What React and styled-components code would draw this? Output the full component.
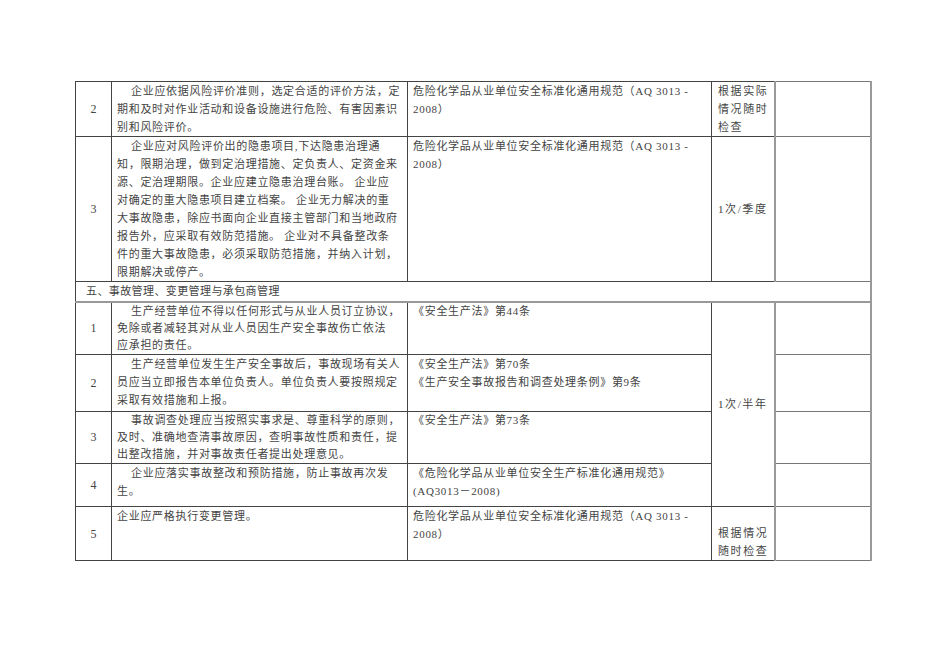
import React from 'react';
import styled, { createGlobalStyle } from 'styled-components';

const GlobalStyle = createGlobalStyle`
  html, body {
    margin: 0;
    padding: 0;
    background: #fff;
  }
  body {
    font-family: "Liberation Serif", "Noto Sans CJK SC", serif;
    color: #444;
  }
`;

const Page = styled.div`
  width: 950px;
  height: 672px;
  padding: 81px 0 0 75px;
  box-sizing: border-box;
  background: #fff;
`;

const Table = styled.table`
  width: 795px;
  table-layout: fixed;
  border-collapse: collapse;
  border-top: 1px solid #888;
  border-bottom: 1px solid #777;
  border-left: 1px solid #666;
  border-right: 2px solid #999;
  font-family: "Liberation Serif", "Noto Sans CJK SC", serif;
  color: #444;
`;

const Row = styled.tr`
  height: ${p => p.$h}px;
  line-height: ${p => p.$lh || 18}px;
`;

const Cell = styled.td`
  border: 1px solid #444;
  padding: 0 4px 0 5px;
  vertical-align: ${p => p.$valign || 'top'};
  text-align: left;
  font-family: "Liberation Serif", "Noto Sans CJK SC", serif;
  font-size: 11px;
  line-height: inherit;
  letter-spacing: 0.7px;
  white-space: nowrap;
  overflow: hidden;
`;

const NumCell = styled(Cell)`
  text-align: center;
  vertical-align: middle;
  font-size: 12px;
  letter-spacing: 0;
  padding: 0;
`;

const FreqCell = styled(Cell)`
  padding: 0 2px 0 6px;
  letter-spacing: 1.6px;
`;

const BlankCell = styled(Cell)`
  border-left: 2px solid #999;
  border-top-color: #777;
  border-bottom-color: #777;
`;

const SectionCell = styled(Cell)`
  padding-left: 10px;
  vertical-align: middle;
  letter-spacing: 0.4px;
  border-bottom: 2px solid #999;
`;

const Line = styled.div`
  padding-left: ${p => (p.$indent ? 14 : 0)}px;
`;

const Lines = ({ lines, indent = true }) => (
  <>
    {lines.map((l, i) => (
      <Line key={i} $indent={indent && i === 0}>{l}</Line>
    ))}
  </>
);

const STD = ['危险化学品从业单位安全标准化通用规范（AQ 3013 -', '2008）'];

const rows = [
  {
    no: '2',
    h: 55,
    text: ['企业应依据风险评价准则，选定合适的评价方法，定', '期和及时对作业活动和设备设施进行危险、有害因素识', '别和风险评价。'],
    basis: STD,
    freq: ['根据实际', '情况随时', '检查'],
    freqAlign: 'top',
  },
  {
    no: '3',
    h: 145,
    text: [
      '企业应对风险评价出的隐患项目,下达隐患治理通',
      '知，限期治理，做到定治理措施、定负责人、定资金来',
      '源、定治理期限。企业应建立隐患治理台账。 企业应',
      '对确定的重大隐患项目建立档案。 企业无力解决的重',
      '大事故隐患，除应书面向企业直接主管部门和当地政府',
      '报告外，应采取有效防范措施。 企业对不具备整改条',
      '件的重大事故隐患，必须采取防范措施，并纳入计划，',
      '限期解决或停产。',
    ],
    basis: STD,
    freq: ['1次/季度'],
    freqAlign: 'middle',
  },
];

const section = [
  {
    no: '1',
    h: 53,
    lh: 17.3,
    text: ['生产经营单位不得以任何形式与从业人员订立协议，', '免除或者减轻其对从业人员因生产安全事故伤亡依法', '应承担的责任。'],
    basis: ['《安全生产法》第44条'],
  },
  {
    no: '2',
    h: 57,
    lh: 18,
    text: ['生产经营单位发生生产安全事故后，事故现场有关人', '员应当立即报告本单位负责人。单位负责人要按照规定', '采取有效措施和上报。'],
    basis: ['《安全生产法》第70条', '《生产安全事故报告和调查处理条例》第9条'],
  },
  {
    no: '3',
    h: 52,
    lh: 16.8,
    text: ['事故调查处理应当按照实事求是、尊重科学的原则，', '及时、准确地查清事故原因，查明事故性质和责任，提', '出整改措施，并对事故责任者提出处理意见。'],
    basis: ['《安全生产法》第73条'],
  },
  {
    no: '4',
    h: 43,
    lh: 18,
    text: ['企业应落实事故整改和预防措施，防止事故再次发', '生。'],
    basis: ['《危险化学品从业单位安全生产标准化通用规范》', '(AQ3013－2008)'],
  },
];

export default function App() {
  return (
    <Page>
      <GlobalStyle />
      <Table>
        <colgroup>
          <col style={{ width: 36 }} />
          <col style={{ width: 296 }} />
          <col style={{ width: 304 }} />
          <col style={{ width: 63 }} />
          <col style={{ width: 96 }} />
        </colgroup>
        <tbody>
          {rows.map(r => (
            <Row key={r.no} $h={r.h}>
              <NumCell>{r.no}</NumCell>
              <Cell><Lines lines={r.text} /></Cell>
              <Cell><Lines lines={r.basis} indent={false} /></Cell>
              <FreqCell $valign={r.freqAlign}><Lines lines={r.freq} indent={false} /></FreqCell>
              <BlankCell />
            </Row>
          ))}
          <Row $h={20}>
            <SectionCell colSpan={5}>五、事故管理、变更管理与承包商管理</SectionCell>
          </Row>
          {section.map((r, i) => (
            <Row key={r.no} $h={r.h} $lh={r.lh}>
              <NumCell>{r.no}</NumCell>
              <Cell><Lines lines={r.text} /></Cell>
              <Cell><Lines lines={r.basis} indent={false} /></Cell>
              {i === 0 && (
                <FreqCell rowSpan={4} $valign="middle">1次/半年</FreqCell>
              )}
              <BlankCell />
            </Row>
          ))}
          <Row $h={54}>
            <NumCell>5</NumCell>
            <Cell><Lines lines={['企业应严格执行变更管理。']} indent={false} /></Cell>
            <Cell><Lines lines={STD} indent={false} /></Cell>
            <FreqCell $valign="bottom"><Lines lines={['根据情况', '随时检查']} indent={false} /></FreqCell>
            <BlankCell />
          </Row>
        </tbody>
      </Table>
    </Page>
  );
}
